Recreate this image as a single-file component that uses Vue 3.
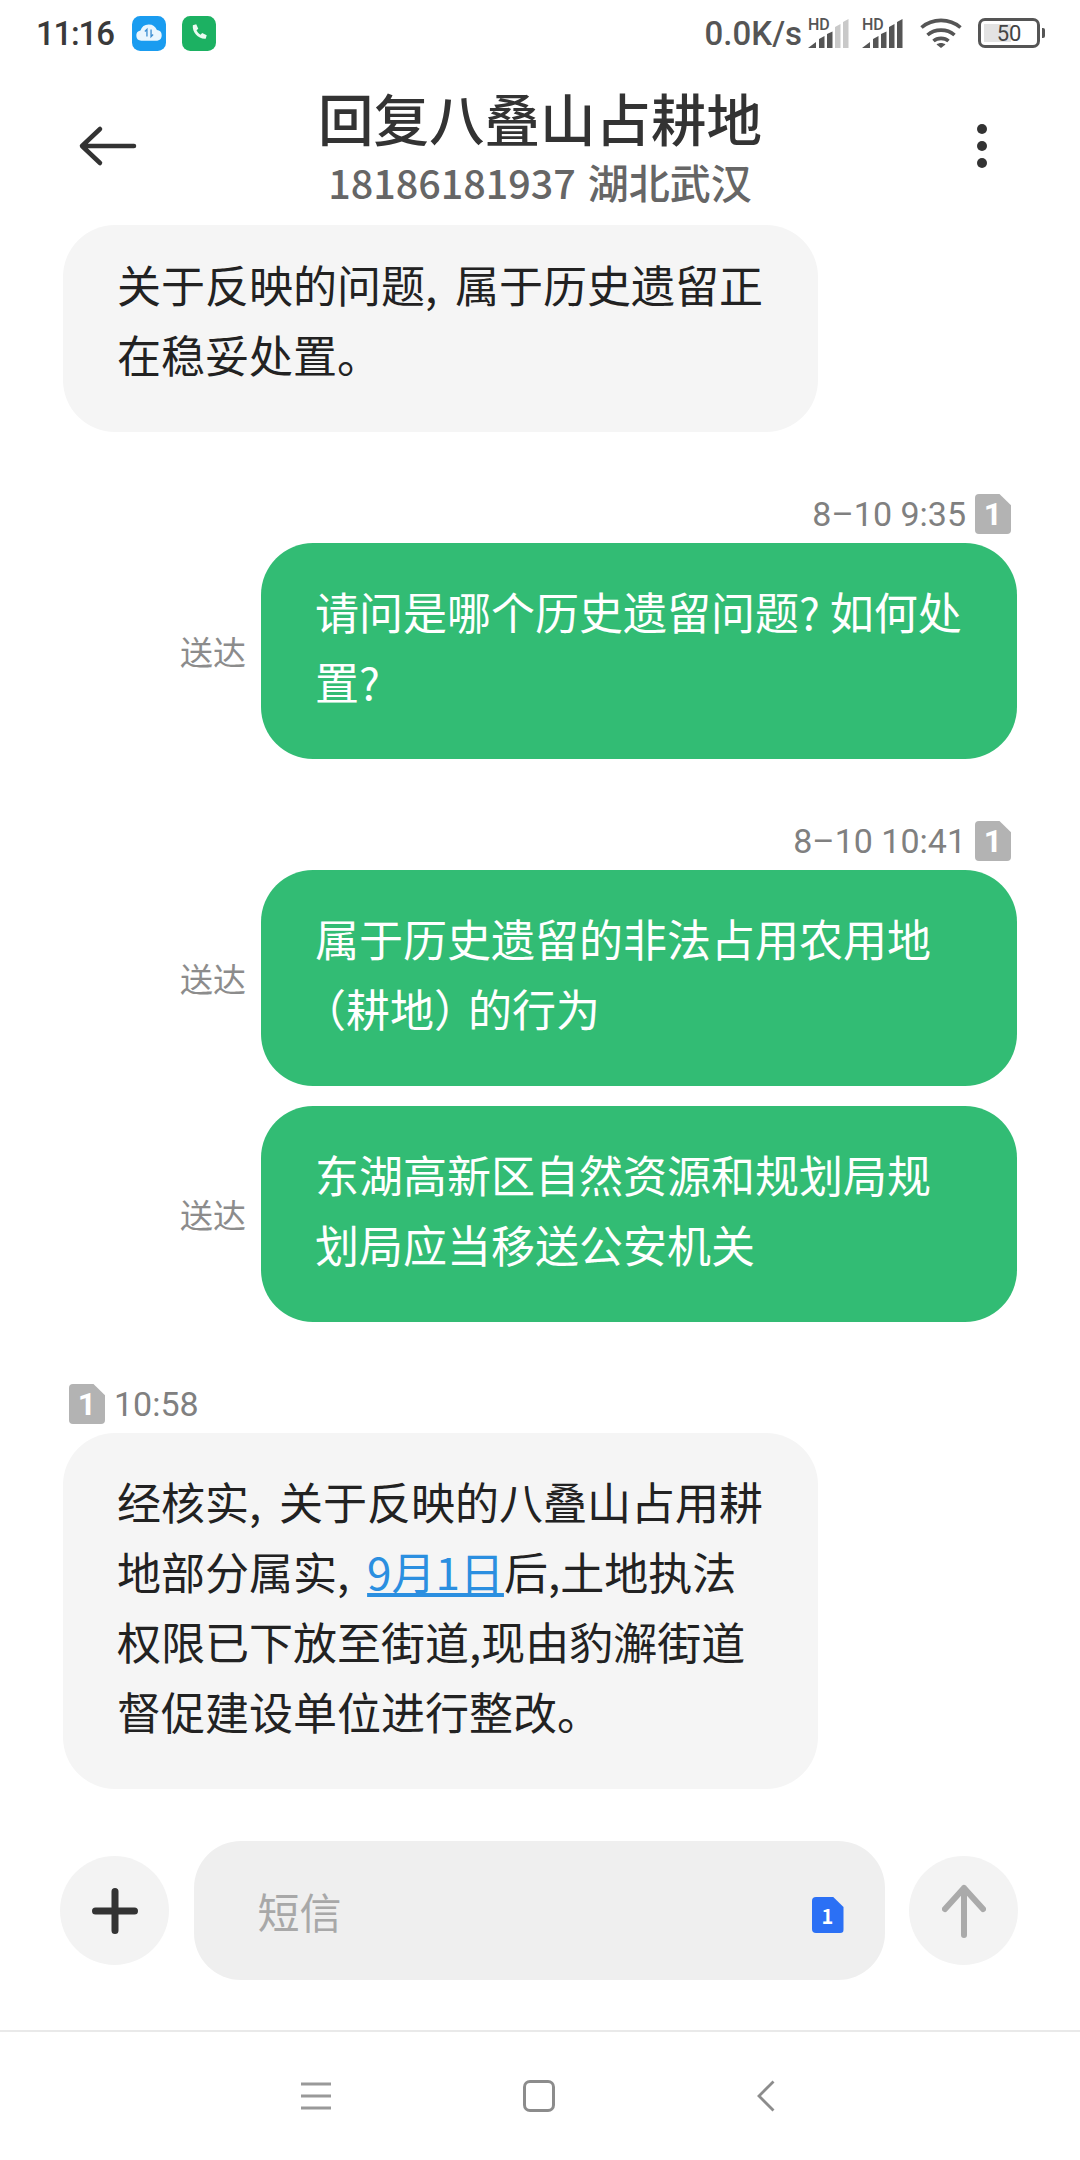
<script setup>
// nothing dynamic on this screen, only the signal icons repeat
const signals = ["#c9c9c9", "#555"];
</script>

<template>
  <div class="screen">
    <div class="status">
      <div class="status-left">
        <span class="clock">11:16</span>
        <svg class="app-icon" viewBox="0 0 33 34">
          <rect width="33" height="34" rx="8" fill="#1a9cf0" />
          <path d="M9 24a5 5 0 0 1-.8-9.900 8.500 8.500 0 0 1 16-.4A5.200 5.200 0 0 1 24.500 24z" fill="#eaf6fe" />
          <path d="M14.500 20v-7l-2 2M18.500 13v7l2-2" fill="none" stroke="#3f8fd2" stroke-width="1.300" />
        </svg>
        <svg class="app-icon" viewBox="0 0 33 34">
          <rect width="33" height="34" rx="8" fill="#1cb162" />
          <path d="M10.500 9l3.300-1 2 4.500-1.700 1.400c.8 1.900 2 3.200 3.900 4.200l1.600-1.600 4.400 2.200-1 3.300c-7 .6-13.300-5.800-12.500-13z" fill="#eafaf1" />
        </svg>
      </div>
      <div class="status-right">
        <span class="speed">0.0K/s</span>
        <svg v-for="(tail, i) in signals" :key="i" class="signal" viewBox="0 -6 42 36">
          <text x="0" y="12" class="hd">HD</text>
          <path d="M0 30l8-6v6zM11 21l5.500-3v12H11zM19 16l5.500-2.500V30H19z" fill="#555" />
          <path d="M27 9l5.500-3v24H27zM35 4l5.500-3v29H35z" :fill="tail" />
        </svg>
        <svg class="wifi" viewBox="0 0 42 30">
          <path d="M1.500 9.500c11-9.500 28-9.500 39 0M7.500 17c7.500-6.500 19.500-6.500 27 0M13.500 23c4-3.500 11-3.500 15 0" fill="none" stroke="#555" stroke-width="3.600" />
          <path d="M16.500 26.500c2.500-2 6.500-2 9 0L21 30z" fill="#555" />
        </svg>
        <div class="battery">
          <div class="battery-body">
            <div class="battery-level"></div>
            <span class="battery-num">50</span>
          </div>
          <div class="battery-tip"></div>
        </div>
      </div>
    </div>

    <div class="header">
      <svg class="back" viewBox="0 0 60 42">
        <path d="M4 21h52M22 4L4 21l18 17" fill="none" stroke="#333" stroke-width="4.500" stroke-linecap="round" stroke-linejoin="round" />
      </svg>
      <div class="header-text">
        <div class="title">回复八叠山占耕地</div>
        <div class="subtitle">18186181937 <span class="region">湖北武汉</span></div>
      </div>
      <div class="more">
        <i></i><i></i><i></i>
      </div>
    </div>

    <div class="thread">
      <div class="bubble received first">
        <div>关于反映的问题, 属于历史遗留正</div>
        <div>在稳妥处置。</div>
      </div>

      <div class="group">
        <div class="meta right">
          <span>8–10 9:35</span>
          <span class="sim"><b>1</b></span>
        </div>
        <div class="sent-row">
          <span class="delivered">送达</span>
          <div class="bubble sent">
            <div>请问是哪个历史遗留问题? 如何处</div>
            <div>置?</div>
          </div>
        </div>
      </div>

      <div class="group">
        <div class="meta right">
          <span>8–10 10:41</span>
          <span class="sim"><b>1</b></span>
        </div>
        <div class="sent-row">
          <span class="delivered">送达</span>
          <div class="bubble sent">
            <div>属于历史遗留的非法占用农用地</div>
            <div><span class="paren-l">（</span>耕地<span class="paren-r">）</span>的行为</div>
          </div>
        </div>
        <div class="sent-row">
          <span class="delivered">送达</span>
          <div class="bubble sent">
            <div>东湖高新区自然资源和规划局规</div>
            <div>划局应当移送公安机关</div>
          </div>
        </div>
      </div>

      <div class="group">
        <div class="meta left">
          <span class="sim"><b>1</b></span>
          <span>10:58</span>
        </div>
        <div class="bubble received">
          <div>经核实, 关于反映的八叠山占用耕</div>
          <div>地部分属实, <a class="date-link">9月1日</a>后,土地执法</div>
          <div>权限已下放至街道,现由豹澥街道</div>
          <div>督促建设单位进行整改。</div>
        </div>
      </div>
    </div>

    <div class="composer">
      <div class="round-btn">
        <svg viewBox="0 0 46 46" class="plus">
          <path d="M23 3.500v39M3.500 23h39" stroke="#333" stroke-width="7" stroke-linecap="round" />
        </svg>
      </div>
      <div class="input">
        <span class="placeholder">短信</span>
        <span class="sim-blue"><b>1</b></span>
      </div>
      <div class="round-btn">
        <svg viewBox="0 0 44 54" class="send">
          <path d="M22 51V4M3 25L22 4l19 21" fill="none" stroke="#aaa" stroke-width="6" stroke-linecap="round" stroke-linejoin="round" />
        </svg>
      </div>
    </div>

    <div class="nav">
      <svg class="nav-menu" viewBox="0 0 30 28">
        <path d="M0 2h30M0 14h30M0 26h30" stroke="#999" stroke-width="3" />
      </svg>
      <div class="nav-home"></div>
      <svg class="nav-back" viewBox="0 0 18 32">
        <path d="M16.500 1.500L2 16l14.500 14.500" fill="none" stroke="#8c8c8c" stroke-width="2.800" />
      </svg>
    </div>
  </div>
</template>

<style>
html,
body {
  margin: 0;
  background: #fff;
}
</style>

<style scoped>
.screen {
  width: 1080px;
  height: 2160px;
  overflow: hidden;
  background: #fff;
  display: flex;
  flex-direction: column;
  font-family: "Noto Sans CJK SC", "Noto Sans", sans-serif;
  color: #222;
}

/* status bar */
.status {
  height: 66px;
  padding: 0 35px 0 36px;
  display: flex;
  justify-content: space-between;
  align-items: center;
  flex-shrink: 0;
}
.status-left {
  display: flex;
  align-items: center;
}
.clock {
  font-family: Roboto, sans-serif;
  font-weight: 500;
  font-size: 33px;
  letter-spacing: -1.200px;
  color: #3a3a3a;
  width: 96px;
}
.app-icon {
  width: 34px;
  height: 35px;
  margin-right: 16px;
}
.status-right {
  display: flex;
  align-items: center;
}
.speed {
  font-family: Roboto, sans-serif;
  font-weight: 500;
  font-size: 33px;
  color: #555;
  margin-right: 6px;
}
.signal {
  width: 42px;
  height: 36px;
  margin-top: -6px;
  margin-right: 12px;
}
.hd {
  font-family: Roboto, sans-serif;
  font-size: 16px;
  font-weight: 500;
  fill: #555;
}
.wifi {
  width: 42px;
  height: 30px;
  margin-left: 4px;
  margin-right: 16px;
}
.battery {
  display: flex;
  align-items: center;
}
.battery-body {
  position: relative;
  width: 62px;
  height: 30px;
  box-sizing: border-box;
  border: 3px solid #555;
  border-radius: 7px;
  display: flex;
  align-items: center;
  justify-content: center;
}
.battery-level {
  position: absolute;
  left: 3px;
  top: 3px;
  bottom: 3px;
  width: 27px;
  background: #e3e3e3;
}
.battery-num {
  position: relative;
  font-family: Roboto, sans-serif;
  font-size: 22px;
  color: #444;
}
.battery-tip {
  width: 3px;
  height: 10px;
  margin-left: 2px;
  background: #555;
  border-radius: 0 2px 2px 0;
}

/* header */
.header {
  height: 159px;
  flex-shrink: 0;
  display: grid;
  grid-template-columns: 1fr auto 1fr;
  align-items: center;
  padding: 0 78px;
  background: #fff;
}
.back {
  width: 60px;
  height: 42px;
}
.header-text {
  text-align: center;
  margin-top: -6px;
}
.title {
  font-size: 55.500px;
  line-height: 78px;
  font-weight: 500;
  color: #333;
}
.subtitle {
  font-size: 39.500px;
  line-height: 50px;
  font-weight: 500;
  color: #666;
}
.region {
  font-size: 41px;
  margin-left: 3px;
}
.more {
  justify-self: end;
  margin-right: 15px;
  width: 10px;
  display: flex;
  flex-direction: column;
  gap: 7px;
}
.more i {
  width: 10px;
  height: 10px;
  border-radius: 50%;
  background: #333;
}

/* messages */
.thread {
  flex: 1;
  min-height: 0;
  padding: 0 63px;
  display: flex;
  flex-direction: column;
}
.bubble {
  box-sizing: border-box;
  width: 755px;
  padding: 33px 54px 43px;
  border-radius: 52px;
  font-size: 44px;
  line-height: 70px;
  white-space: nowrap;
}
.received {
  background: #f5f5f5;
  color: #222;
  word-spacing: 8px;
}
.first {
  padding-top: 24px;
}
.sent {
  background: #32bc74;
  color: #fff;
  width: 756px;
}
.paren-l,
.paren-r {
  font-feature-settings: "halt";
}
.paren-l {
  margin-left: 9px;
}
.paren-r {
  margin-right: 12px;
}
.group {
  margin-top: 62px;
  display: flex;
  flex-direction: column;
}
.meta {
  height: 40px;
  margin-bottom: 9px;
  display: flex;
  align-items: center;
  gap: 9px;
  font-family: Roboto, sans-serif;
  font-size: 34px;
  color: #808080;
}
.meta.right {
  justify-content: flex-end;
  padding-right: 6px;
}
.meta.left {
  padding-left: 6px;
}
.sim {
  width: 36px;
  height: 40px;
  background: #b3b3b3;
  border-radius: 4px;
  clip-path: polygon(0 0, 68% 0, 100% 28%, 100% 100%, 0 100%);
  display: flex;
  align-items: center;
  justify-content: center;
  color: #fff;
  font-size: 32px;
}
.sim b {
  font-weight: 700;
}
.sent-row {
  display: flex;
  justify-content: flex-end;
  align-items: center;
  gap: 15px;
  margin-bottom: 20px;
}
.sent-row:last-child {
  margin-bottom: 0;
}
.delivered {
  font-size: 33px;
  color: #8c8c8c;
}
.date-link {
  color: #2b8fe0;
  text-decoration: underline;
}

/* input */
.composer {
  height: 139px;
  flex-shrink: 0;
  margin-bottom: 50px;
  padding: 0 62px 0 60px;
  display: flex;
  align-items: center;
  justify-content: space-between;
}
.round-btn {
  width: 109px;
  height: 109px;
  border-radius: 50%;
  background: #f3f3f3;
  display: flex;
  align-items: center;
  justify-content: center;
}
.plus {
  width: 46px;
  height: 46px;
}
.send {
  width: 44px;
  height: 54px;
}
.input {
  box-sizing: border-box;
  width: 691px;
  height: 139px;
  background: #efefef;
  border-radius: 47px;
  padding: 0 41px 0 64px;
  display: flex;
  align-items: center;
  justify-content: space-between;
}
.placeholder {
  font-size: 42px;
  color: #a8a8a8;
}
.sim-blue {
  width: 32px;
  height: 36px;
  margin-top: 9px;
  background: #2b70f5;
  border-radius: 4px;
  clip-path: polygon(0 0, 68% 0, 100% 28%, 100% 100%, 0 100%);
  display: flex;
  align-items: center;
  justify-content: center;
  color: #fff;
  font-size: 20px;
}

/* navigation bar */
.nav {
  height: 130px;
  flex-shrink: 0;
  border-top: 2px solid #e9e9e9;
  box-sizing: border-box;
  display: flex;
  align-items: center;
  justify-content: center;
  padding-right: 4px;
}
.nav-menu {
  width: 30px;
  height: 28px;
  margin-right: 192px;
}
.nav-home {
  box-sizing: border-box;
  width: 32px;
  height: 32px;
  border: 3px solid #8c8c8c;
  border-radius: 7px;
  margin-right: 202px;
}
.nav-back {
  width: 18px;
  height: 32px;
}
</style>
